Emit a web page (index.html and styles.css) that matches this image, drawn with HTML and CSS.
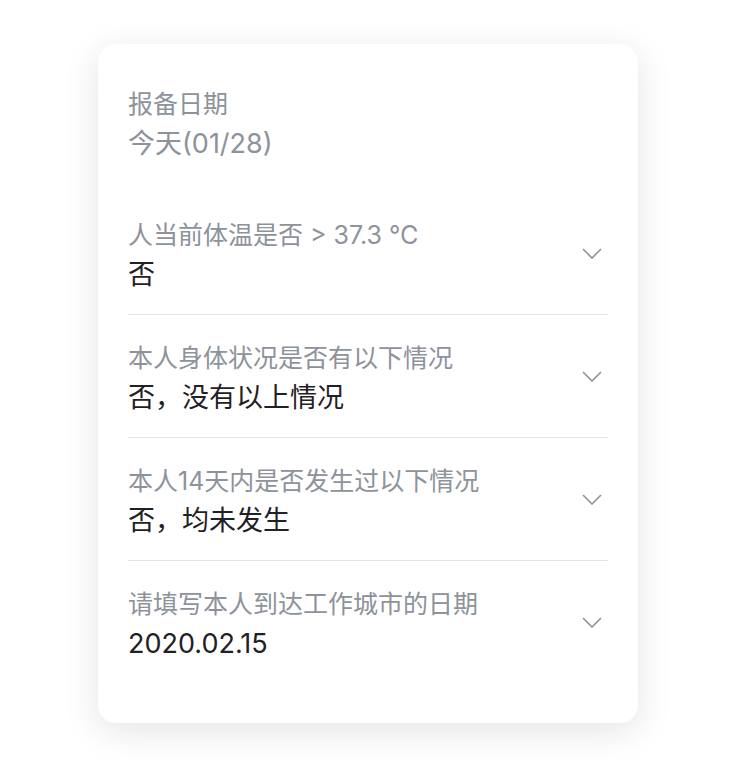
FILE: index.html
```html
<!DOCTYPE html>
<html lang="zh-CN">
<head>
<meta charset="utf-8">
<link rel="stylesheet" href="styles.css">
</head>
<body>
<div class="card">
  <div class="head">
    <div class="label">报备日期</div>
    <div class="value muted">今天(01/28)</div>
  </div>
  <div class="row">
    <div class="texts">
      <div class="label">人当前体温是否 &gt; 37.3 ℃</div>
      <div class="value">否</div>
    </div>
    <svg class="chev" viewBox="0 0 20 11" width="20" height="11"><path d="M1 1 L10 10 L19 1" fill="none" stroke="#8d929b" stroke-width="1.6"/></svg>
  </div>
  <div class="row">
    <div class="texts">
      <div class="label">本人身体状况是否有以下情况</div>
      <div class="value">否，没有以上情况</div>
    </div>
    <svg class="chev" viewBox="0 0 20 11" width="20" height="11"><path d="M1 1 L10 10 L19 1" fill="none" stroke="#8d929b" stroke-width="1.6"/></svg>
  </div>
  <div class="row">
    <div class="texts">
      <div class="label">本人14天内是否发生过以下情况</div>
      <div class="value">否，均未发生</div>
    </div>
    <svg class="chev" viewBox="0 0 20 11" width="20" height="11"><path d="M1 1 L10 10 L19 1" fill="none" stroke="#8d929b" stroke-width="1.6"/></svg>
  </div>
  <div class="row last">
    <div class="texts">
      <div class="label">请填写本人到达工作城市的日期</div>
      <div class="value">2020.02.15</div>
    </div>
    <svg class="chev" viewBox="0 0 20 11" width="20" height="11"><path d="M1 1 L10 10 L19 1" fill="none" stroke="#8d929b" stroke-width="1.6"/></svg>
  </div>
</div>
</body>
</html>
```
FILE: styles.css
```css
html, body {
  margin: 0;
  padding: 0;
  background: #ffffff;
}
body {
  font-family: "Inter", "Noto Sans CJK SC", sans-serif;
  padding-top: 44px;
  height: 775px;
  box-sizing: border-box;
}
.card {
  width: 540px;
  box-sizing: border-box;
  margin-left: 98px;
  height: 679px;
  background: #fff;
  border-radius: 18px;
  box-shadow: 0 8px 36px rgba(0, 0, 0, 0.11);
  padding: 40px 30px 40px 30px;
}
.head {
  margin-bottom: 28px;
}
.label {
  font-size: 25px;
  line-height: 40px;
  height: 40px;
  color: #8d929b;
  white-space: nowrap;
}
.value {
  font-size: 27px;
  line-height: 40px;
  height: 40px;
  color: #1f2124;
  white-space: nowrap;
}
.value.muted {
  color: #8d929b;
}
.row {
  display: flex;
  align-items: center;
  justify-content: space-between;
  padding: 23px 0 19px 0;
  border-bottom: 1px solid #e3e4e6;
}
.row.last {
  border-bottom: none;
}
.chev {
  margin-right: 6px;
  margin-top: -4px;
}
```
